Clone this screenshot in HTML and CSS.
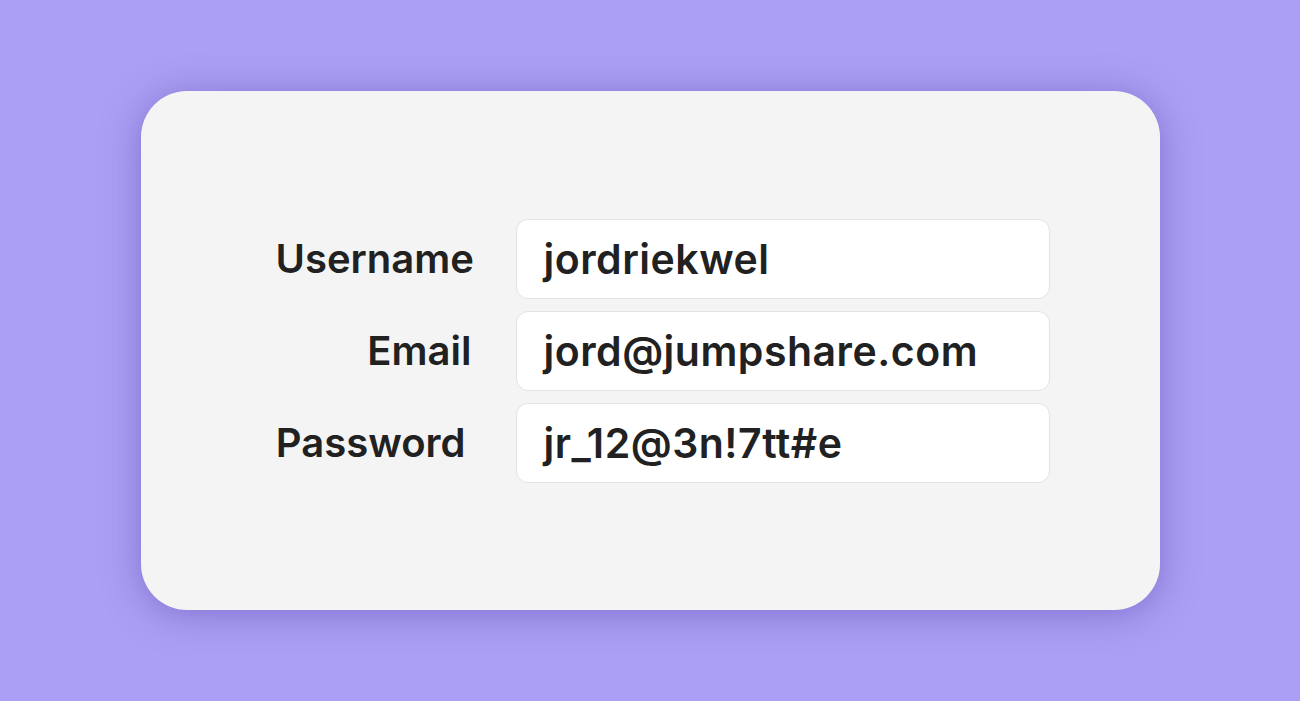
FILE: index.html
```html
<!DOCTYPE html>
<html lang="en">

<head>
    <meta charset="UTF-8">
    <meta name="viewport" content="width=device-width, initial-scale=1.0">
    <title>Sign up</title>
    <link rel="stylesheet" href="styles.css">
</head>

<body>
    <div id="background">
        <div class="card">
            <div class="form">
                <div class="label">Username</div>
                <div class="field">jordriekwel</div>

                <div class="label">Email</div>
                <div class="field">jord@jumpshare.com</div>

                <div class="label short">Password</div>
                <div class="field">jr_12@3n!7tt#e</div>
            </div>
        </div>
    </div>
</body>

</html>
```

FILE: styles.css
```css
* {
    margin: 0;
    box-sizing: border-box;
    padding: 0;
}

body {
    font-family: Inter, "Liberation Sans", sans-serif;
    color: #212121;
}

#background {
    width: 100%;
    height: 100vh;
    background-color: #aa9ff4;
    display: flex;
    align-items: center;
    justify-content: center;
}

.card {
    width: 1019px;
    height: 519px;
    background-color: #f4f4f4;
    border-radius: 46px;
    box-shadow: 0 4px 36px rgba(90, 70, 170, 0.5);
    display: flex;
    align-items: center;
    justify-content: center;
    padding-left: 25px;
}

.form {
    display: grid;
    grid-template-columns: 196px 534px;
    column-gap: 44px;
    row-gap: 12px;
    align-items: center;
}

.label {
    text-align: right;
    font-size: 40px;
    font-weight: 600;
}

.label.short {
    padding-right: 6px;
}

.field {
    height: 80px;
    line-height: 78px;
    background-color: #fff;
    border: 1px solid #e3e3e3;
    border-radius: 12px;
    padding-left: 27px;
    font-size: 41px;
    font-weight: 600;
    letter-spacing: 0.5px;
}
```
